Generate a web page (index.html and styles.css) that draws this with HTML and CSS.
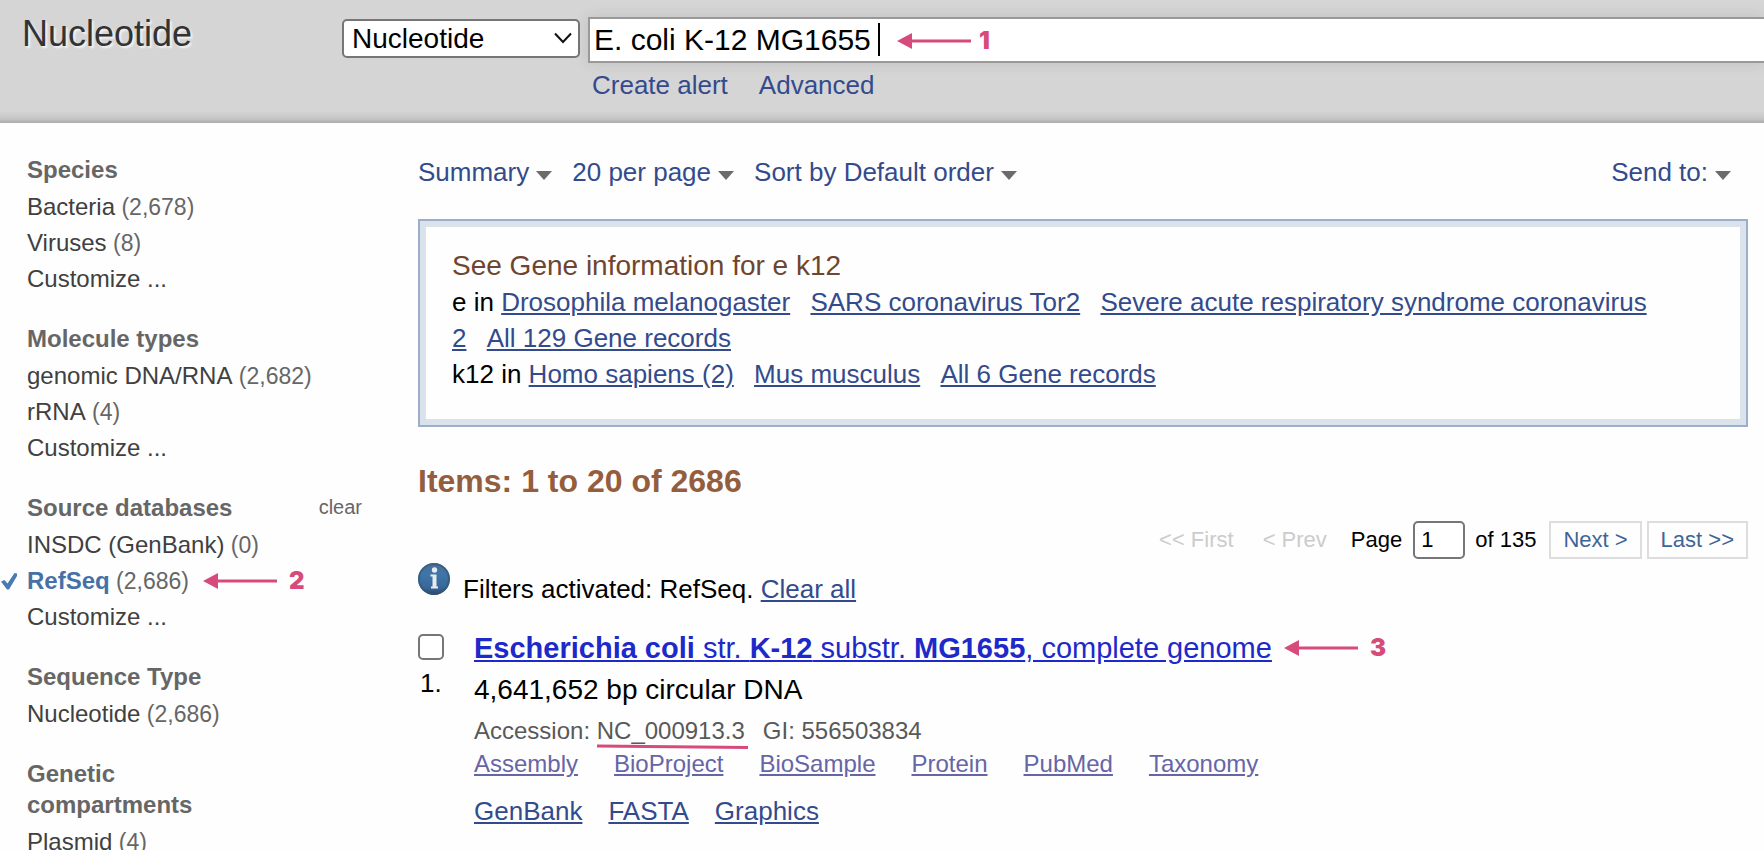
FILE: index.html
```html
<!DOCTYPE html>
<html lang="en">
<head>
<meta charset="utf-8">
<title>E. coli K-12 MG1655 - Nucleotide</title>
<link rel="stylesheet" href="styles.css">
</head>
<body>
<header class="header">
  <h1 class="site-title">Nucleotide</h1>
  <div class="db-picker">
    <select class="db-select" aria-label="Database">
      <option>Nucleotide</option>
    </select>
    <svg class="db-chevron" width="18" height="12" viewBox="0 0 18 12" aria-hidden="true"><path d="M1 1.5L9 10L17 1.5" fill="none" stroke="#111" stroke-width="2"/></svg>
  </div>
  <div class="search">
    <div class="search-field">
      <input class="search-input" type="text" aria-label="Search term" value="E. coli K-12 MG1655 ">
      <span class="caret"></span>
      <span class="callout callout-search">
        <svg class="arrow" viewBox="0 0 74 16" aria-hidden="true"><path d="M0 8L15 0V16Z M14 6.5H74V9.5H14Z"/></svg>
        <span class="callout-number">1</span>
      </span>
    </div>
    <nav class="search-links">
      <a href="#alert">Create alert</a>
      <a href="#advanced">Advanced</a>
    </nav>
  </div>
</header>

<div class="page">
  <aside class="sidebar">
    <section class="facet">
      <h3 class="facet-title">Species</h3>
      <ul class="facet-list">
        <li><a href="#bacteria">Bacteria</a><span class="count"> (2,678)</span></li>
        <li><a href="#viruses">Viruses</a><span class="count"> (8)</span></li>
        <li><a href="#species">Customize ...</a></li>
      </ul>
    </section>
    <section class="facet">
      <h3 class="facet-title">Molecule types</h3>
      <ul class="facet-list">
        <li><a href="#genomic">genomic DNA/RNA</a><span class="count"> (2,682)</span></li>
        <li><a href="#rrna">rRNA</a><span class="count"> (4)</span></li>
        <li><a href="#molecule">Customize ...</a></li>
      </ul>
    </section>
    <section class="facet">
      <div class="facet-head">
        <h3 class="facet-title">Source databases</h3>
        <a class="facet-clear" href="#clear">clear</a>
      </div>
      <ul class="facet-list">
        <li><a href="#insdc">INSDC (GenBank)</a><span class="count"> (0)</span></li>
        <li class="active">
          <svg class="check" width="16" height="18" viewBox="0 0 16 18" aria-hidden="true"><path d="M0 9.5L3.5 8L6.5 11.5L13.5 1L16 1.5V4L8 17.5H6Z" fill="#4a7ab2"/></svg>
          <span><a href="#refseq">RefSeq</a><span class="count"> (2,686)</span></span>
          <span class="callout">
            <svg class="arrow" viewBox="0 0 74 16" aria-hidden="true"><path d="M0 8L15 0V16Z M14 6.5H74V9.5H14Z"/></svg>
            <span class="callout-number">2</span>
          </span>
        </li>
        <li><a href="#source">Customize ...</a></li>
      </ul>
    </section>
    <section class="facet">
      <h3 class="facet-title">Sequence Type</h3>
      <ul class="facet-list">
        <li><a href="#nucleotide">Nucleotide</a><span class="count"> (2,686)</span></li>
      </ul>
    </section>
    <section class="facet">
      <h3 class="facet-title">Genetic compartments</h3>
      <ul class="facet-list">
        <li><a href="#plasmid">Plasmid</a><span class="count"> (4)</span></li>
      </ul>
    </section>
  </aside>

  <main class="main">
    <div class="toolbar">
      <button class="menu" type="button">Summary<i class="down"></i></button>
      <button class="menu" type="button">20 per page<i class="down"></i></button>
      <button class="menu" type="button">Sort by Default order<i class="down"></i></button>
      <button class="menu menu-send" type="button">Send to:<i class="down"></i></button>
    </div>

    <section class="gene-box">
      <h2 class="gene-title">See Gene information for e k12</h2>
      <p class="gene-line">e in <a href="#dmel">Drosophila melanogaster</a> <a href="#tor2">SARS coronavirus Tor2</a> <a href="#cov2">Severe acute respiratory syndrome coronavirus 2</a> <a href="#e-all">All 129 Gene records</a></p>
      <p class="gene-line">k12 in <a href="#human">Homo sapiens (2)</a> <a href="#mouse">Mus musculus</a> <a href="#k12-all">All 6 Gene records</a></p>
    </section>

    <h2 class="items-title">Items: 1 to 20 of 2686</h2>

    <nav class="pager">
      <span class="pager-off">&lt;&lt; First</span>
      <span class="pager-off pager-prev">&lt; Prev</span>
      <label class="pager-label" for="page-number">Page</label>
      <input class="pager-input" id="page-number" type="text" value="1">
      <span class="pager-total">of 135</span>
      <a class="pager-button" href="#next">Next &gt;</a>
      <a class="pager-button" href="#last">Last &gt;&gt;</a>
    </nav>

    <div class="notice">
      <svg width="32" height="32" viewBox="0 0 32 32" aria-hidden="true">
        <defs>
          <linearGradient id="info-fill" x1="0" y1="0" x2="0" y2="1">
            <stop offset="0" stop-color="#4c6f96"/>
            <stop offset="0.35" stop-color="#3f75a8"/>
            <stop offset="0.75" stop-color="#38699a"/>
            <stop offset="1" stop-color="#2b4768"/>
          </linearGradient>
        </defs>
        <circle cx="16" cy="16" r="16" fill="url(#info-fill)"/>
        <circle cx="16" cy="16" r="15" fill="none" stroke="#33516f" stroke-width="2" opacity="0.6"/>
        <circle cx="16.500" cy="7" r="2.700" fill="#e6ebf0"/>
        <path d="M12.500 11.500H18.500V23.500H20V25.500H13V23.500H14.500V13.500H12.500Z" fill="#e6ebf0"/>
      </svg>
      <p class="notice-text">Filters activated: RefSeq. <a href="#clear-all">Clear all</a></p>
    </div>

    <article class="result">
      <div class="result-select">
        <input class="result-check" id="result-1" type="checkbox">
        <label class="result-rank" for="result-1">1.</label>
      </div>
      <div class="result-body">
        <div class="result-heading">
          <a class="result-title" href="#nc-000913"><b>Escherichia coli</b> str. <b>K-12</b> substr. <b>MG1655</b>, complete genome</a>
          <span class="callout">
            <svg class="arrow" viewBox="0 0 74 16" aria-hidden="true"><path d="M0 8L15 0V16Z M14 6.5H74V9.5H14Z"/></svg>
            <span class="callout-number">3</span>
          </span>
        </div>
        <p class="result-desc">4,641,652 bp circular DNA</p>
        <p class="result-ids">Accession: <span class="accession">NC_000913.3<svg class="marker" viewBox="0 0 151 6" aria-hidden="true"><path d="M0 2L151 3.500" stroke="#d64b7c" stroke-width="3"/></svg></span><span class="gi">GI: 556503834</span></p>
        <nav class="related">
          <a href="#assembly">Assembly</a>
          <a href="#bioproject">BioProject</a>
          <a href="#biosample">BioSample</a>
          <a href="#protein">Protein</a>
          <a href="#pubmed">PubMed</a>
          <a href="#taxonomy">Taxonomy</a>
        </nav>
        <nav class="formats">
          <a href="#genbank">GenBank</a>
          <a href="#fasta">FASTA</a>
          <a href="#graphics">Graphics</a>
        </nav>
      </div>
    </article>
  </main>
</div>
</body>
</html>
```
FILE: styles.css
```css
* {
  box-sizing: border-box;
}

body,
h1,
h2,
h3,
p,
ul {
  margin: 0;
  padding: 0;
}

body {
  background: #fefefe;
  color: #000;
  font-family: "Liberation Sans", Arial, sans-serif;
  font-size: 26px;
  line-height: 36px;
}

a {
  color: #334b8c;
}

button,
input,
select {
  font-family: inherit;
}

/* Header */

.header {
  display: grid;
  grid-template-columns: 312px 238px 1fr;
  column-gap: 8px;
  align-items: start;
  padding: 0 0 20px 22px;
  background: linear-gradient(to top, #ababab, #c4c4c4 4px, #d5d5d5 12px);
}

.site-title {
  padding-top: 12px;
  font-size: 36px;
  font-weight: 400;
  line-height: 44px;
  color: #333;
  text-shadow: 2px 2px 2px #f4f4f4;
}

.db-picker {
  position: relative;
  margin-top: 19px;
}

.db-select {
  display: block;
  width: 100%;
  height: 39px;
  padding: 0 32px 0 8px;
  border: 2px solid #767676;
  border-radius: 5px;
  background: #fff;
  color: #000;
  font-size: 28px;
  appearance: none;
}

.db-chevron {
  position: absolute;
  top: 13px;
  right: 8px;
}

.search {
  padding-top: 17px;
}

.search-field {
  position: relative;
}

.search-input {
  display: block;
  width: 100%;
  height: 46px;
  padding: 0 4px;
  border: 2px solid #999;
  border-right: 0;
  border-radius: 0;
  background: #fff;
  color: #000;
  font-size: 30px;
  box-shadow: 0 0 14px rgba(0, 0, 0, 0.1);
  outline: 0;
}

.caret {
  position: absolute;
  top: 6px;
  left: 290px;
  width: 2px;
  height: 33px;
  background: #000;
}

.search-links {
  display: flex;
  gap: 31px;
  margin: 4px 0 0 4px;
}

.search-links a {
  text-decoration: none;
}

/* Numbered pointers */

.callout {
  display: inline-flex;
  align-items: center;
  gap: 12px;
}

.callout-search {
  position: absolute;
  top: 6px;
  left: 309px;
  gap: 8px;
}

.arrow {
  width: 74px;
  height: 16px;
  fill: #d64b7c;
}

.callout-number {
  color: #d64b7c;
  font-family: Inter, "Liberation Sans", sans-serif;
  font-size: 24px;
  font-weight: 900;
}

/* Page columns */

.page {
  display: grid;
  grid-template-columns: 335px 1fr;
  column-gap: 56px;
  padding: 31px 16px 0 27px;
}

/* Filters */

.sidebar {
  font-size: 24px;
}

.facet {
  margin-bottom: 26px;
}

.facet-head {
  display: flex;
  justify-content: space-between;
  align-items: flex-start;
}

.facet-title {
  max-width: 240px;
  margin-bottom: 4px;
  font-size: 24px;
  font-weight: 700;
  line-height: 31px;
  color: #666;
}

.facet-clear {
  font-size: 20px;
  line-height: 31px;
  color: #666;
  text-decoration: none;
}

.facet-list {
  list-style: none;
}

.facet-list a {
  color: #404040;
  text-decoration: none;
}

.facet-list .active {
  display: flex;
  align-items: center;
  margin-left: -26px;
}

.facet-list .active a {
  color: #4571a8;
  font-weight: 700;
}

.active .check {
  margin-right: 10px;
}

.active .callout {
  margin-left: 14px;
}

.count {
  font-size: 23px;
  color: #666;
}

/* Display settings */

.toolbar {
  display: flex;
  gap: 20px;
  padding-right: 17px;
  margin-bottom: 29px;
}

.menu {
  display: flex;
  align-items: center;
  gap: 7px;
  padding: 0;
  border: 0;
  background: none;
  color: #334b8c;
  font-size: 26px;
  line-height: 36px;
}

.menu-send {
  margin-left: auto;
}

.down {
  margin-top: 6px;
  border-top: 9px solid #6b6b6b;
  border-right: 8px solid transparent;
  border-left: 8px solid transparent;
}

/* Gene box */

.gene-box {
  padding: 27px 86px 33px 32px;
  border: 2px solid #9daec8;
  box-shadow: inset 0 0 0 6px #dae3eb;
}

.gene-title {
  font-size: 28px;
  font-weight: 400;
  color: #6e4530;
}

.gene-line a + a {
  margin-left: 13px;
}

/* Item count and pager */

.items-title {
  margin-top: 36px;
  font-size: 32px;
  color: #945d3d;
}

.pager {
  display: flex;
  justify-content: flex-end;
  align-items: center;
  margin-top: 22px;
  font-size: 22px;
}

.pager-off {
  color: #ccc;
}

.pager-prev {
  margin: 0 24px 0 29px;
}

.pager-input {
  width: 52px;
  height: 38px;
  margin: 0 10px 0 11px;
  padding: 0 6px;
  border: 2px solid #767676;
  border-radius: 5px;
  background: #fff;
  font-size: 22px;
}

.pager-total {
  margin-right: 8px;
}

.pager-button {
  margin-left: 5px;
  padding: 0 12px;
  border: 2px solid #ddd;
  color: #3f6596;
  line-height: 34px;
  text-decoration: none;
}

/* Active filter notice */

.notice {
  display: flex;
  gap: 13px;
  margin-top: 4px;
}

.notice-text {
  padding-top: 8px;
}

/* Result */

.result {
  display: grid;
  grid-template-columns: 56px 1fr;
  margin-top: 20px;
}

.result-select {
  display: flex;
  flex-direction: column;
  gap: 5px;
  padding-top: 7px;
}

.result-check {
  width: 26px;
  height: 26px;
  margin: 0;
  border: 2px solid #767676;
  border-radius: 5px;
  background: #fff;
  appearance: none;
}

.result-rank {
  padding-left: 2px;
}

.result-heading {
  display: flex;
  align-items: center;
  gap: 12px;
}

.result-title,
.result-desc {
  line-height: 42px;
}

.result-title {
  font-size: 29px;
  color: #1d29c9;
}

.result-desc {
  font-size: 28px;
}

.result-ids {
  margin-top: 3px;
  font-size: 24px;
  line-height: 33px;
  color: #595959;
}

.accession {
  position: relative;
}

.marker {
  position: absolute;
  bottom: -6px;
  left: 0;
  width: 151px;
  height: 6px;
}

.gi {
  margin-left: 18px;
}

.related {
  display: flex;
  gap: 36px;
  font-size: 24px;
  line-height: 33px;
}

.related a {
  color: #6665a6;
}

.formats {
  display: flex;
  gap: 26px;
  margin-top: 13px;
}
```
